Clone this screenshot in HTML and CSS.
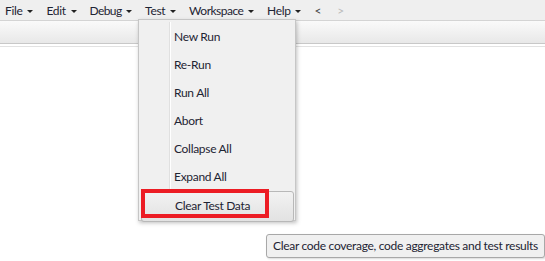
FILE: index.html
```html
<!DOCTYPE html>
<html lang="en">
<head>
    <meta charset="UTF-8">
    <title>Developer Console</title>
    <link rel="stylesheet" href="styles.css">
</head>
<body>
    <div class="menubar">
        <span class="menu">File <i class="caret"></i></span>
        <span class="menu">Edit <i class="caret"></i></span>
        <span class="menu">Debug <i class="caret"></i></span>
        <span class="menu">Test <i class="caret"></i></span>
        <span class="menu">Workspace <i class="caret"></i></span>
        <span class="menu">Help <i class="caret"></i></span>
        <span class="nav">&lt;</span>
        <span class="nav disabled">&gt;</span>
    </div>
    <div class="toolbar"></div>
    <div class="content"></div>

    <div class="dropdown">
        <div class="item">New Run</div>
        <div class="item">Re-Run</div>
        <div class="item">Run All</div>
        <div class="item">Abort</div>
        <div class="item">Collapse All</div>
        <div class="item">Expand All</div>
        <div class="item active">Clear Test Data</div>
    </div>
    <div class="highlight"></div>

    <div class="tooltip">Clear code coverage, code aggregates and test results</div>
</body>
</html>
```

FILE: styles.css
```css
body {
    margin: 0;
    font-family: Lato, "Noto Sans", Arial, sans-serif;
    font-size: 12px;
    letter-spacing: -0.3px;
    color: #1e2433;
    background-color: #fff;
    width: 545px;
    height: 261px;
    overflow: hidden;
    position: relative;
}

.menubar {
    height: 21px;
    background-color: #efefef;
    display: flex;
    align-items: center;
    padding-left: 5px;
    box-sizing: border-box;
    border-bottom: 1px solid #d4d4d4;
}

.menu {
    margin-right: 13px;
    white-space: nowrap;
}

.menu:nth-child(3) {
    letter-spacing: -0.6px;
}

.menu:nth-child(5) {
    letter-spacing: -0.5px;
}

.caret {
    display: inline-block;
    width: 0;
    height: 0;
    border-left: 3px solid transparent;
    border-right: 3px solid transparent;
    border-top: 3px solid #222;
    vertical-align: middle;
    margin-left: 2px;
}

.nav {
    margin-right: 16px;
    color: #444;
}

.nav.disabled {
    color: #bbb;
}

.toolbar {
    height: 22px;
    background: linear-gradient(#fafafa, #e8e8e8);
    border-bottom: 1px solid #c8c8c8;
}

.content {
    border-top: 2px solid #fff;
    border-bottom: 1px solid #e2e2e2;
}

.dropdown {
    position: absolute;
    left: 138px;
    top: 19px;
    width: 158px;
    height: 202px;
    box-sizing: border-box;
    background-color: #f0f0f0;
    border: 1px solid #c6c6c6;
    box-shadow: 1px 2px 4px rgba(0, 0, 0, 0.25);
    padding-top: 3px;
}

.dropdown::before {
    content: "";
    position: absolute;
    left: 30px;
    top: 2px;
    bottom: 2px;
    width: 1px;
    background-color: #e0e0e0;
    border-right: 1px solid #fff;
}

.item {
    height: 28px;
    line-height: 28px;
    padding-left: 35px;
    position: relative;
}

.item.active {
    margin: 0 1px 0 2px;
    padding-left: 33px;
    height: 29px;
    line-height: 27px;
    border: 1px solid #b8b8b8;
    border-radius: 3px;
    background: linear-gradient(#f2f2f2, #e2e2e2);
}

.highlight {
    position: absolute;
    left: 141px;
    top: 189px;
    width: 120px;
    height: 21px;
    border: 4px solid #ec1c24;
}

.tooltip {
    position: absolute;
    left: 266px;
    top: 234px;
    height: 24px;
    line-height: 22px;
    box-sizing: border-box;
    padding: 0 6px;
    background-color: #f0f0f0;
    border: 1px solid #a8a8a8;
    border-radius: 3px;
    box-shadow: 1px 1px 2px rgba(0, 0, 0, 0.15);
    white-space: nowrap;
}
```
